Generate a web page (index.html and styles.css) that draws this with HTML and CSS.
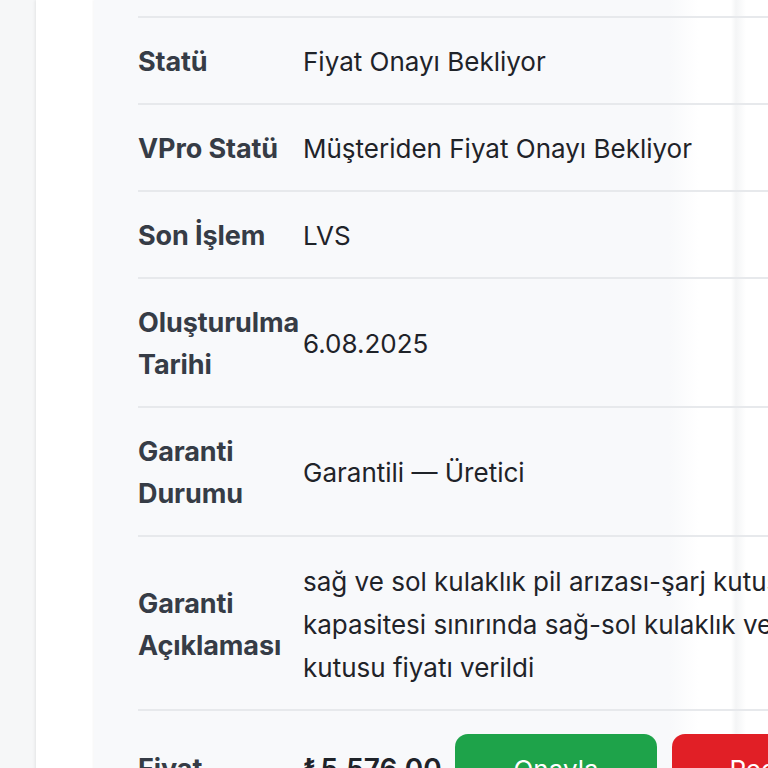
FILE: index.html
```html
<!DOCTYPE html>
<html lang="tr">
<head>
    <meta charset="UTF-8">
    <title>Servis Detayı</title>
    <link rel="stylesheet" href="styles.css">
</head>
<body>
    <div class="page">
        <div class="card">
            <div class="panel">
                <table class="detail-table">
                    <tr>
                        <th>Statü</th>
                        <td>Fiyat Onayı Bekliyor</td>
                    </tr>
                    <tr>
                        <th>VPro Statü</th>
                        <td>Müşteriden Fiyat Onayı Bekliyor</td>
                    </tr>
                    <tr>
                        <th>Son İşlem</th>
                        <td>LVS</td>
                    </tr>
                    <tr>
                        <th>Oluşturulma Tarihi</th>
                        <td>6.08.2025</td>
                    </tr>
                    <tr>
                        <th>Garanti Durumu</th>
                        <td>Garantili — Üretici</td>
                    </tr>
                    <tr>
                        <th>Garanti Açıklaması</th>
                        <td class="desc">sağ ve sol kulaklık pil arızası-şarj kutusu<br>kapasitesi sınırında sağ-sol kulaklık ve şarj<br>kutusu fiyatı verildi</td>
                    </tr>
                    <tr class="price-row">
                        <th>Fiyat</th>
                        <td>
                            <div class="price-line">
                                <span class="price">₺5.576,00</span>
                                <button class="btn btn-approve">Onayla</button>
                                <button class="btn btn-reject">Reddet</button>
                            </div>
                        </td>
                    </tr>
                </table>
            </div>
        </div>
    </div>
</body>
</html>
```

FILE: styles.css
```css
* {
    margin: 0;
    padding: 0;
    box-sizing: border-box;
}

body {
    font-family: Inter, "Noto Sans", sans-serif;
    background: #f6f7f8;
    overflow: hidden;
    width: 768px;
    height: 768px;
}

.page {
    padding-left: 36px;
}

/* 카드 */
.card {
    background: #fff;
    box-shadow: -1px 0 3px rgba(0, 0, 0, 0.08);
    padding-left: 58px;
    width: 1100px;
    height: 900px;
}

.panel {
    background: linear-gradient(to right, #f8f9fb 0, #f8f9fb 575px, #fff 605px, #fff 637px, #f4f5f6 642px, #fff 652px);
    box-shadow: -1px 0 2px rgba(0, 0, 0, 0.04);
    padding: 16px 0 0 44px;
    height: 100%;
}

.detail-table {
    border-collapse: collapse;
    width: 960px;
    font-size: 26px;
    line-height: 42px;
}

.detail-table tr {
    border-top: 2px solid #e7e9ec;
}

.detail-table th {
    width: 165px;
    text-align: left;
    vertical-align: middle;
    font-size: 27px;
    font-weight: 700;
    color: #363c46;
    padding: 23px 0 20px;
    letter-spacing: -0.1px;
}

.detail-table td {
    vertical-align: middle;
    color: #1f2329;
    font-weight: 400;
    padding: 23px 0 20px;
}

.detail-table td.desc {
    line-height: 43px;
}

/* 가격 행 */
.price-line {
    display: flex;
    align-items: center;
    gap: 15px;
}

.price {
    font-weight: 600;
    font-size: 28px;
    color: #1f2329;
    width: 137px;
}

.btn {
    border: none;
    border-radius: 13px;
    width: 202px;
    height: 70px;
    color: #fff;
    font-family: inherit;
    font-size: 26px;
}

.btn-approve {
    background: #1ea34a;
}

.btn-reject {
    background: #e11f26;
}
```
